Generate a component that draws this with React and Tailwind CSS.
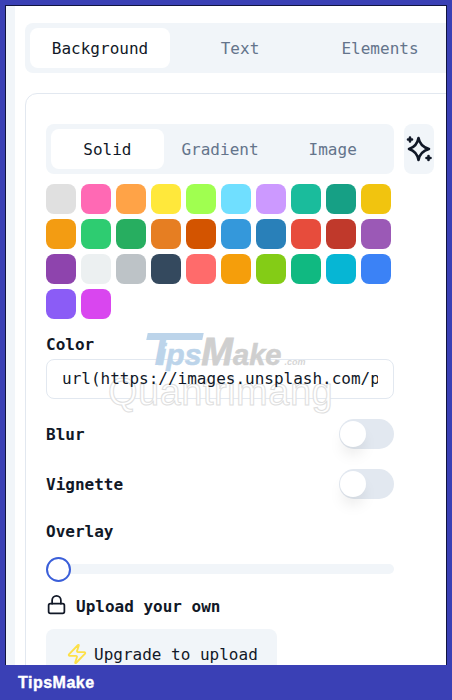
import { Lock, Zap } from 'lucide-react';

const swatches = [
  '#e0e0e0', '#ff69b4', '#ffa347', '#ffe83b', '#a0ff50', '#70dfff', '#cc99ff', '#1abc9c', '#16a085', '#f1c40f',
  '#f39c12', '#2ecc71', '#27ae60', '#e67e22', '#d35400', '#3498db', '#2980b9', '#e74c3c', '#c0392b', '#9b59b6',
  '#8e44ad', '#ecf0f1', '#bdc3c7', '#34495e', '#ff6b6b', '#f59e0b', '#84cc16', '#10b981', '#06b6d4', '#3b82f6',
  '#8b5cf6', '#d946ef',
];

const Toggle = ({ label }) => (
  <div className="flex items-center justify-between h-[30px]">
    <span className="pt-[2px] font-bold text-[#111827]">{label}</span>
    <div className="w-[55px] h-[30px] rounded-full bg-[#e2e8f0] py-[2px] pl-[1px]">
      <div className="w-[26px] h-[26px] rounded-full bg-white shadow-[0_10px_15px_-3px_rgba(0,0,0,0.1)]" />
    </div>
  </div>
);

const MagicIcon = () => (
  <svg width="28" height="28" viewBox="0 0 28 28" fill="none" stroke="#111827" strokeWidth="2.6" strokeLinecap="round" strokeLinejoin="round" className="shrink-0">
    <path d="M13.5 3 Q15 11.5 24 14 Q15 16.5 13.5 25 Q12 16.5 4 14 Q12 11.5 13.5 3 Z" />
    <path d="M5 2.5 V6.5 M3 4.5 H7" />
    <path d="M23.5 21 V25 M21.5 23 H25.5" />
  </svg>
);

export default function App() {
  return (
    <div className="relative flex flex-col h-[700px] w-[452px] overflow-hidden bg-[#3a40b5] font-['DejaVu_Sans_Mono','Liberation_Mono',monospace] text-[#111827]">
      <div className="flex-1 min-h-0 ml-[5px] mr-[5px] mt-[5px] overflow-hidden border-t border-l border-r border-[#10143f] bg-[#f1f5f9] pl-[9px]">
        <div className="h-full bg-white pl-[10px] pt-[17px]">
          {/* main tabs */}
          <div className="flex h-[50px] w-[440px] rounded-l-lg bg-[#f1f5f9] p-[5px]">
            <div className="w-[140px] pt-[2px] flex items-center justify-center rounded-lg bg-white">Background</div>
            <div className="w-[140px] pt-[2px] flex items-center justify-center text-[#64748b]">Text</div>
            <div className="w-[140px] pt-[2px] flex items-center justify-center text-[#64748b]">Elements</div>
          </div>

          <div className="mt-[20px] w-[440px] rounded-tl-xl border border-[#e2e8f0] pl-[20px] pt-[30px] pb-6 h-[600px]">
            <div className="flex gap-[10px]">
              <div className="flex w-[348px] h-[50px] rounded-lg bg-[#f1f5f9] p-[5px]">
                <div className="w-[113px] pt-[2px] flex items-center justify-center rounded-lg bg-white">Solid</div>
                <div className="w-[113px] pt-[2px] flex items-center justify-center text-[#64748b]">Gradient</div>
                <div className="w-[113px] pt-[2px] flex items-center justify-center text-[#64748b]">Image</div>
              </div>
              <div className="w-[30px] h-[50px] rounded-lg bg-[#f1f5f9] flex items-center justify-center">
                <MagicIcon />
              </div>
            </div>

            <div className="mt-[10px] flex flex-wrap gap-[5px] w-[348px]">
              {swatches.map((c) => (
                <div key={c} className="w-[30px] h-[30px] rounded-lg" style={{ backgroundColor: c }} />
              ))}
            </div>

            <div className="mt-[14px] font-bold h-[24px] leading-[24px]">Color</div>
            <div className="mt-[2px] w-[348px] h-[40px] rounded-lg border border-[#e2e8f0] px-[15px] flex items-center overflow-hidden whitespace-nowrap">
              <span className="relative z-10 block w-[316px] overflow-hidden">url(https://images.unsplash.com/photo</span>
            </div>

            <div className="mt-[20px] w-[348px] flex flex-col gap-[20px]">
              <Toggle label="Blur" />
              <Toggle label="Vignette" />
            </div>

            <div className="mt-[21px] font-bold h-[24px] leading-[24px]">Overlay</div>
            <div className="relative mt-[13px] w-[348px] h-[25px] pt-[7px]">
              <div className="w-full h-[10px] rounded-full bg-[#f1f5f9]" />
              <div className="absolute left-0 top-0 w-[25px] h-[25px] rounded-full bg-white border-2 border-[#3b5fd9]" />
            </div>

            <div className="mt-[13px] flex items-center gap-[9px] h-[24px]">
              <Lock size={21} strokeWidth={2} className="mb-[6px] text-[#111827]" />
              <span className="font-bold">Upload your own</span>
            </div>

            <div className="mt-[10px] w-[231px] h-[50px] rounded-lg bg-[#f1f5f9] pl-[20px] flex items-center gap-[6px]">
              <Zap size={22} strokeWidth={2} className="text-[#fde047]" />
              <span className="pt-[2px]">Upgrade to upload</span>
            </div>
          </div>
        </div>
      </div>

      <div className="h-[35px] shrink-0 flex items-center pl-[18px] font-['Liberation_Sans',sans-serif] font-bold text-[16px] tracking-[0.5px] text-white [-webkit-text-stroke:0.4px_#ffffff]">TipsMake</div>

      {/* watermark, sits behind the input text */}
      <div className="absolute left-[147px] top-[333px] w-[56px] h-[7px] -skew-x-12 bg-[#bcd4ea]" />
      <div className="absolute left-[147px] top-[328px] flex items-baseline font-['Liberation_Sans',sans-serif] font-bold italic">
        <span className="text-[44px] leading-[44px] text-[#bcd4ea] w-[14px]">T</span>
        <span className="text-[30px] leading-[44px] text-[#bcd4ea] ml-[-6px] pl-[3px] [-webkit-text-stroke:0.6px_#bcd4ea]">ips</span>
        <span className="text-[38px] leading-[44px] text-[#cfcfcf] [-webkit-text-stroke:0.8px_#cfcfcf]">M</span>
        <span className="text-[29px] leading-[44px] text-[#cfcfcf] [-webkit-text-stroke:0.6px_#cfcfcf]">ake</span>
        <span className="ml-[3px] text-[9px] text-[#d6d6d6]">.com</span>
      </div>
      <div className="absolute left-[108px] top-[370px] font-['Liberation_Sans',sans-serif] text-[38px] leading-[44px] tracking-[0.5px] text-white [-webkit-text-stroke:1px_#dedede]">Quantrimang</div>
    </div>
  );
}
